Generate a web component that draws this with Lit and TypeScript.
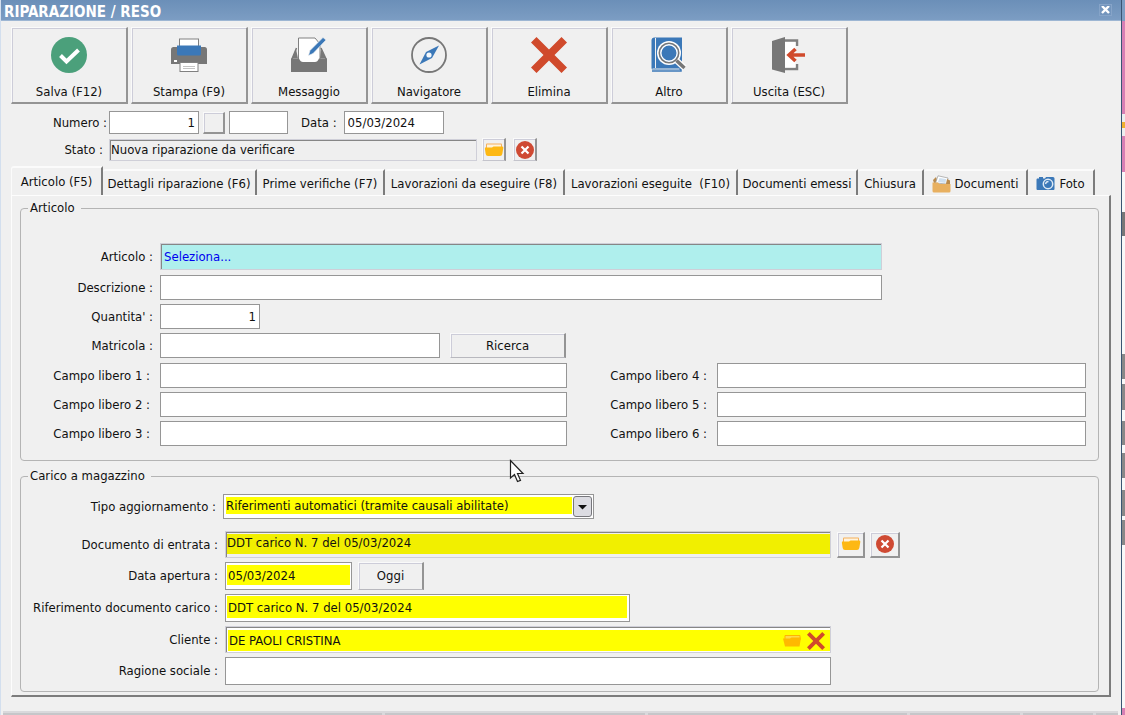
import { LitElement, html, css, svg, nothing } from "lit";
import { customElement, state } from "lit/decorators.js";
import { classMap } from "lit/directives/class-map.js";
import { styleMap } from "lit/directives/style-map.js";

const toolIcons: Record<string, unknown> = {
  save: svg`<circle cx="18" cy="18" r="18" fill="#4ba07b"/><path d="M9.500 18.500L15.500 24.500L27.500 13" fill="none" stroke="#fff" stroke-width="4"/>`,
  print: svg`<path d="M0 12.500Q0 10 2.500 10H33.500Q36 10 36 12.500V27H0Z" fill="#777"/><rect x="8.500" y="2" width="19" height="9" fill="#fff" stroke="#808080"/><path d="M6 8.500H30V17Q30 18.500 28.500 18.500H7.500Q6 18.500 6 17Z" fill="#3b78b8"/><rect x="3" y="23" width="3" height="2" fill="#fff"/><rect x="9" y="25.500" width="18" height="9" fill="#fff" stroke="#808080"/><path d="M12 29.500H24M12 31.500H24" stroke="#c4c4c4"/>`,
  message: svg`<path d="M5.500 11L1 22V24H35V22L30 11" fill="none" stroke="#777" stroke-width="1.500"/><path d="M7.500 1H24L29 7V26H7.500Z" fill="#fff" stroke="#808080"/><path d="M0 21.500H8Q9.500 25 12 25H24Q26.500 25 28 21.500H36V35H0Z" fill="#777"/><path d="M5 12L1 21.500H7ZM30 12L35 21.500H29Z" fill="#777"/><path d="M17.500 18.500L19 13.500L32 .5L35 3L22 16.500Z" fill="#3b78b8" stroke="#f0f0f0" stroke-width=".6"/>`,
  compass: svg`<circle cx="18" cy="18" r="17" fill="none" stroke="#777" stroke-width="1.800"/><path d="M28 8.500L21 21L8.500 27.500L15 15Z" fill="#3b78b8"/><circle cx="18" cy="18" r="2.600" fill="#f4f8fc"/>`,
  remove: svg`<path d="M5.500 0L18 12.500L30.500 0L36 5.500L23.500 18L36 30.500L30.500 36L18 23.500L5.500 36L0 30.500L12.500 18L0 5.500Z" fill="#d04a2c"/>`,
  book: svg`<path d="M3.500 .5H31V33H2.500Q.5 33 .5 31V3.500Q.5 .5 3.500 .5Z" fill="#3b78b8"/><path d="M4.500 1V31M1.500 32H28.500" stroke="#f0f0f0" fill="none"/><path d="M1 34H30V30" stroke="#3b78b8" fill="none" stroke-width="1.500"/><circle cx="18" cy="16" r="12" fill="#fff"/><path d="M25 23L33.500 31" stroke="#fff" stroke-width="6"/><circle cx="18" cy="16" r="9.700" fill="#3b78b8" stroke="#777" stroke-width="1.600"/><circle cx="18" cy="16" r="8.200" fill="none" stroke="#fff" stroke-width="1.400"/><path d="M25.500 23.500L33.500 31" stroke="#777" stroke-width="3.500"/>`,
  exit: svg`<path d="M14 3.500H26V9M26 27V32H14" fill="none" stroke="#808080" stroke-width="2.500"/><rect x="14" y="5" width="10.500" height="25.500" fill="#fff"/><path d="M1 4L14 0V36L1 32.500Z" fill="#777"/><path d="M34 18H18M24.500 12L18 18L24.500 24" fill="none" stroke="#d04a2c" stroke-width="3.600"/>`,
};

const folder = html`<svg class="glyph" viewBox="0 0 20 18" aria-hidden="true"><path d="M2 6V3.500Q2 2.500 3 2.500H17Q18 2.500 18 3.500V8H2Z" fill="#f5b05a"/><path d="M3 3.500H17V8H3Z" fill="#fff3dc"/><path d="M1 6.500H8L9.500 5.500H18.500Q19.500 5.500 19.300 7L18.300 13Q18 15 16 15H4Q2 15 1.700 13L.9 8Z" fill="#fdb813"/></svg>`;
const cancel = html`<svg class="glyph" viewBox="0 0 20 18" aria-hidden="true"><circle cx="10" cy="9" r="9" fill="#cf4a33"/><path d="M6.500 5.500L13.500 12.500M13.500 5.500L6.500 12.500" stroke="#fff" stroke-width="2.200"/></svg>`;
const papers = html`<svg class="tabicon" viewBox="0 0 19 18" aria-hidden="true"><path d="M2 8L1 5L4 2L6 8Z" fill="#b98b4e"/><path d="M3.500 8L6 .8L16 3L15 9Z" fill="#fff" stroke="#9a9a9a" stroke-width=".7"/><path d="M6 7L7.500 3L14 4L13.500 8Z" fill="#cfe0f0"/><path d="M15 4L18 5.500V9H14Z" fill="#b98b4e"/><path d="M.5 7.500H6L7.500 9H18.500V16Q18.500 17.500 17 17.500H2Q.5 17.500 .5 16Z" fill="#e8b060"/></svg>`;
const camera = html`<svg class="tabicon" viewBox="0 0 19 18" aria-hidden="true"><path d="M1 3.500H3V2H7V3.500H9L10 2H17Q18.500 2 18.500 3.500V14Q18.500 15 17.500 15H1.500Q.5 15 .5 14V4.500Z" fill="#3b78b8"/><circle cx="12" cy="9" r="4.700" fill="#3b78b8" stroke="#dfeaf5" stroke-width="1.500"/><path d="M9.500 9Q10 6.500 12.500 6.500" fill="none" stroke="#dfeaf5" stroke-width="1.300"/></svg>`;

const tools = [
  { icon: "save", label: "Salva (F12)" },
  { icon: "print", label: "Stampa (F9)" },
  { icon: "message", label: "Messaggio" },
  { icon: "compass", label: "Navigatore" },
  { icon: "remove", label: "Elimina" },
  { icon: "book", label: "Altro" },
  { icon: "exit", label: "Uscita (ESC)" },
];

const tabs: { label: string; width: number; icon?: unknown }[] = [
  { label: "Articolo (F5)", width: 92 },
  { label: "Dettagli riparazione (F6)", width: 154 },
  { label: "Prime verifiche (F7)", width: 128 },
  { label: "Lavorazioni da eseguire (F8)", width: 180 },
  { label: "Lavorazioni eseguite\u00a0 (F10)", width: 173 },
  { label: "Documenti emessi", width: 120 },
  { label: "Chiusura", width: 66 },
  { label: "Documenti", width: 104, icon: papers },
  { label: "Foto", width: 67, icon: camera },
];

@customElement("app-root")
export class AppRoot extends LitElement {
  @state() private active = 0;

  static styles = css`
    :host {
      display: flex;
      min-height: 100vh;
      background: #f0f0f0;
      color: #111;
      font: 13px/16px "DejaVu Sans Condensed", "DejaVu Sans", sans-serif;
    }
    * { box-sizing: border-box; }
    button, input, select { font: inherit; color: inherit; margin: 0; border-radius: 0; outline: none; }
    svg { display: block; flex: none; }
    .window {
      flex: 1;
      min-width: 0;
      display: flex;
      flex-direction: column;
      border-left: 1px solid #d3dfee;
    }
    .title {
      display: flex;
      align-items: center;
      justify-content: space-between;
      height: 21px;
      padding: 0 9px 0 3px;
      background: linear-gradient(#6b8fb8, #7c9dc3);
      color: #fff;
      border-bottom: 1px solid #9db6d3;
    }
    h1 { margin: 0; padding-top: 3px; font: bold 15px/18px "DejaVu Sans Condensed", "DejaVu Sans", sans-serif; }
    .close { width: 13px; height: 12px; padding: 1px; border: 1px solid #86a4c8; background: #7395bd; }
    .edge {
      width: 4px;
      border-left: 1px solid #3a5573;
      background: linear-gradient(#7c9dc3 21px, #d87fb4 21px 114px, #eee 114px 122px, #f0b030 122px 128px, #eee 128px 136px, #d87fb4 136px 172px, #f8f8f8 172px 212px, #777 212px 236px, #f8f8f8 236px 354px, #888 354px 379px, #f8f8f8 379px 384px, #888 384px 410px, #f8f8f8 410px 421px, #888 421px 445px, #f8f8f8 445px 453px, #888 453px 478px, #f8f8f8 478px 490px, #888 490px 516px, #f8f8f8 516px 520px, #888 520px 545px, #f8f8f8 545px 708px, #d87fb4 708px);
    }
    .toolbar { display: flex; gap: 3px; padding: 6px 10px 0; }
    .bevel {
      background: #f0f0f0;
      border: solid;
      border-width: 1px 2px 2px 1px;
      border-color: #fafafa #949494 #949494 #fafafa;
      box-shadow: inset 1px 1px 0 #cdcdd9;
    }
    .tool {
      display: flex;
      flex-direction: column;
      align-items: center;
      gap: 11px;
      width: 117px;
      height: 77px;
      padding: 9px 0 0;
    }
    .head { display: grid; gap: 4px; padding: 7px 10px 0; }
    .row { display: flex; align-items: center; }
    .row label { flex: none; text-align: right; }
    .head .lab { width: 98px; padding-right: 6px; }
    .head .near { padding-right: 2px; }
    .head .field { height: 23px; }
    .field { border: 1px solid #969696; background: #fff; padding: 0 3px; min-width: 0; height: 25px; }
    .right { text-align: right; }
    .sunk { border-color: #cfcfd8; box-shadow: inset 1px 1px 0 #868686; }
    .w-num { width: 90px; }
    .spin { width: 22px; height: 22px; margin: 0 4px; }
    .w-suf { width: 59px; }
    .lab-date { padding: 0 7px 0 13px; }
    .w-date { width: 100px; }
    .head .state { width: 368px; height: 22px; padding: 0 1px 1px; background: #efefef; }
    .iconbtn { display: grid; place-items: center; padding: 0; width: 24px; height: 23px; margin-left: 5px; }
    .head .iconbtn { border-bottom: 1px solid #c4c4cc; }
    .iconbtn + .iconbtn { margin-left: 7px; }
    .glyph { width: 20px; height: 18px; }
    .tabs { display: flex; align-items: flex-end; height: 34px; padding: 4px 10px 0; }
    .tab {
      display: flex;
      align-items: center;
      justify-content: center;
      gap: 4px;
      height: 26px;
      padding: 2px 0 0;
      white-space: nowrap;
      background: #f0f0f0;
      border: solid;
      border-width: 2px 2px 0 0;
      border-color: #fbfbfb #7c7c7c #fbfbfb #fbfbfb;
      border-radius: 3px 0 0 0;
    }
    .tab.on { height: 30px; padding: 0 0 1px; margin-bottom: -1px; border-left-width: 1px; }
    .tabicon { width: 19px; height: 18px; }
    .panel {
      display: grid;
      gap: 7px;
      margin: 0 10px;
      padding: 4px 10px 3px 8px;
      border: solid;
      border-width: 1px 2px 2px 1px;
      border-color: #fdfdfd #7c7c7c #7c7c7c #fdfdfd;
    }
    fieldset { margin: 0; min-width: 0; border: 1px solid #b4b4b4; border-radius: 4px; padding: 27px 12px 14px 0; }
    legend { margin-left: 7px; padding: 0 6px 0 2px; }
    .stack { display: grid; gap: 5px; }
    .group { display: grid; gap: 4px; }
    .art .lab { width: 139px; padding-right: 7px; }
    .art .free { padding-right: 10px; }
    .wide { width: 722px; }
    .pick { height: 27px; background: #afefed; color: #0000f0; padding: 0 3px; }
    .w-qty { width: 100px; }
    .w-serial { width: 280px; }
    .push { padding: 0; height: 25px; border-bottom: 1px solid #b8b8be; }
    .search { width: 116px; margin-left: 10px; }
    .half { width: 407px; }
    .lab2 { width: 150px; padding-right: 10px; }
    .grow { flex: 1; }
    .load { padding: 10px 12px 6px 0; }
    .load .lab { width: 204px; padding-right: 7px; }
    .load .first .lab { width: 202px; margin-bottom: 8px; }
    .combo { position: relative; width: 371px; margin-bottom: 8px; }
    .combo select {
      display: block;
      width: 100%;
      appearance: none;
      padding: 2px 21px 4px 2px;
      background: linear-gradient(#ff0, #ff0) content-box, #fff;
    }
    .drop { position: absolute; right: 2px; top: 2px; width: 19px; height: 21px; pointer-events: none; }
    .y { background: linear-gradient(#ff0, #ff0) content-box, #fff; }
    .tall { height: 28px; }
    .long { width: 606px; }
    .doc { height: 27px; padding: 0 0 5px 1px; background: linear-gradient(#f1ef00, #f1ef00) 1px 2px / 100% 20px no-repeat, #f0f0f0; }
    .open { width: 127px; padding: 2px 1px 4px 1px; text-indent: 1px; }
    .today { width: 66px; margin-left: 6px; }
    .ref { width: 405px; padding: 1px 2px 3px 1px; text-indent: 1px; }
    .client { display: flex; align-items: center; height: 27px; padding: 3px 0 1px 2px; }
    .client input { flex: 1; min-width: 0; border: 0; background: transparent; padding: 0 1px; }
    .bare { display: grid; place-items: center; border: 0; background: none; padding: 0; width: 20px; height: 20px; }
    .bare + .bare { width: 28px; }
    .load .iconbtn { width: 28px; height: 26px; margin-left: 6px; }
    .load .iconbtn + .iconbtn { width: 30px; margin-left: 5px; }
    .status { display: flex; gap: 3px; height: 4px; margin: auto 3px 0 2px; padding-top: 2px; background: #d9d9dc; }
    .status span { background: #c6c6c9; }
    .s1 { flex: 380; } .s2 { flex: 260; } .s3 { flex: 260; } .s4 { flex: 110; } .s5 { flex: 70; } .s6 { flex: 22; }
    .cursor { position: absolute; left: 509px; top: 459px; width: 16px; height: 25px; pointer-events: none; }
  `;

  private free(n: number) {
    return html`<div class="row">
      <label class="lab free" for="free${n}">Campo libero ${n} :</label>
      <input class="field half" id="free${n}" />
      <label class="lab2" for="free${n + 3}">Campo libero ${n + 3} :</label>
      <input class="field grow" id="free${n + 3}" />
    </div>`;
  }

  render() {
    return html`
      <main class="window">
        <header class="title">
          <h1>RIPARAZIONE / RESO</h1>
          <button class="close" aria-label="Chiudi">
            <svg width="9" height="8" viewBox="0 0 9 8"><path d="M1 0L8 7M8 0L1 7" stroke="#fff" stroke-width="2.400" /></svg>
          </button>
        </header>
        <nav class="toolbar">
          ${tools.map((t) => html`<button class="bevel tool">
            <svg width="36" height="36" viewBox="0 0 36 36" aria-hidden="true">${toolIcons[t.icon]}</svg>
            <span>${t.label}</span>
          </button>`)}
        </nav>
        <section class="head">
          <div class="row">
            <label class="lab near" for="num">Numero :</label>
            <input class="field right w-num" id="num" value="1" />
            <button class="bevel spin" aria-label="Numerazione"></button>
            <input class="field w-suf" aria-label="Suffisso" />
            <label class="lab-date" for="date">Data :</label>
            <input class="field w-date" id="date" value="05/03/2024" />
          </div>
          <div class="row">
            <label class="lab" for="state">Stato :</label>
            <input class="field sunk state" id="state" readonly value="Nuova riparazione da verificare" />
            <button class="bevel iconbtn" aria-label="Apri stato">${folder}</button>
            <button class="bevel iconbtn" aria-label="Annulla stato">${cancel}</button>
          </div>
        </section>
        <div class="tabs" role="tablist">
          ${tabs.map((t, i) => html`<button
            role="tab"
            aria-selected=${i === this.active}
            class=${classMap({ tab: true, on: i === this.active })}
            style=${styleMap({ width: `${t.width}px` })}
            @click=${() => (this.active = i)}
          >${t.icon ?? nothing}<span>${t.label}</span></button>`)}
        </div>
        <section class="panel" role="tabpanel">
          <fieldset class="art">
            <legend>Articolo</legend>
            <div class="stack">
              <div class="row">
                <label class="lab" for="item">Articolo :</label>
                <input class="field sunk wide pick" id="item" value="Seleziona..." />
              </div>
              <div class="group">
                <div class="row">
                  <label class="lab" for="desc">Descrizione :</label>
                  <input class="field wide" id="desc" />
                </div>
                <div class="row">
                  <label class="lab" for="qty">Quantita' :</label>
                  <input class="field right w-qty" id="qty" value="1" />
                </div>
                <div class="row">
                  <label class="lab" for="serial">Matricola :</label>
                  <input class="field w-serial" id="serial" />
                  <button class="bevel push search">Ricerca</button>
                </div>
              </div>
              <div class="group">${[1, 2, 3].map((n) => this.free(n))}</div>
            </div>
          </fieldset>
          <fieldset class="load">
            <legend>Carico a magazzino</legend>
            <div class="group">
              <div class="row first">
                <label class="lab" for="kind">Tipo aggiornamento :</label>
                <div class="combo">
                  <select class="field" id="kind"><option>Riferimenti automatici (tramite causali abilitate)</option></select>
                  <svg class="drop" viewBox="0 0 19 21" aria-hidden="true"><rect x=".5" y=".5" width="18" height="20" rx="2.500" fill="#dcdce2" stroke="#77777c" /><path d="M5 9H14L9.500 13.500Z" fill="#111" /></svg>
                </div>
              </div>
              <div class="row">
                <label class="lab" for="doc">Documento di entrata :</label>
                <input class="field sunk long doc" id="doc" readonly value="DDT carico N. 7 del 05/03/2024" />
                <button class="bevel iconbtn" aria-label="Apri documento">${folder}</button>
                <button class="bevel iconbtn" aria-label="Annulla documento">${cancel}</button>
              </div>
              <div class="row">
                <label class="lab" for="open">Data apertura :</label>
                <input class="field y tall open" id="open" value="05/03/2024" />
                <button class="bevel push tall today">Oggi</button>
              </div>
              <div class="row">
                <label class="lab" for="ref">Riferimento documento carico :</label>
                <input class="field y tall ref" id="ref" value="DDT carico N. 7 del 05/03/2024" />
              </div>
              <div class="row">
                <label class="lab" for="client">Cliente :</label>
                <div class="field sunk y long client">
                  <input id="client" value="DE PAOLI CRISTINA" />
                  <button class="bare" aria-label="Apri cliente"><svg class="glyph" viewBox="0 0 20 18" aria-hidden="true"><path d="M3 3.500H18V8H3Z" fill="#ffd84a" stroke="#ffb400" /><path d="M1 6.500H8L9.500 5.500H19L17.500 14.500H3Z" fill="#ffb800" /></svg></button>
                  <button class="bare" aria-label="Rimuovi cliente"><svg width="18" height="18" viewBox="0 0 36 36" aria-hidden="true">${toolIcons.remove}</svg></button>
                </div>
              </div>
              <div class="row">
                <label class="lab" for="company">Ragione sociale :</label>
                <input class="field tall long" id="company" />
              </div>
            </div>
          </fieldset>
        </section>
        <footer class="status"><span class="s1"></span><span class="s2"></span><span class="s3"></span><span class="s4"></span><span class="s5"></span><span class="s6"></span></footer>
      </main>
      <div class="edge"></div>
      <svg class="cursor" viewBox="0 0 16 25" aria-hidden="true"><path d="M1.500 1.500V19L5.500 15.500L8.500 22.500L11.500 21.300L8.500 14.500H14Z" fill="#fff" stroke="#222" stroke-width="1.200" /></svg>
    `;
  }
}
